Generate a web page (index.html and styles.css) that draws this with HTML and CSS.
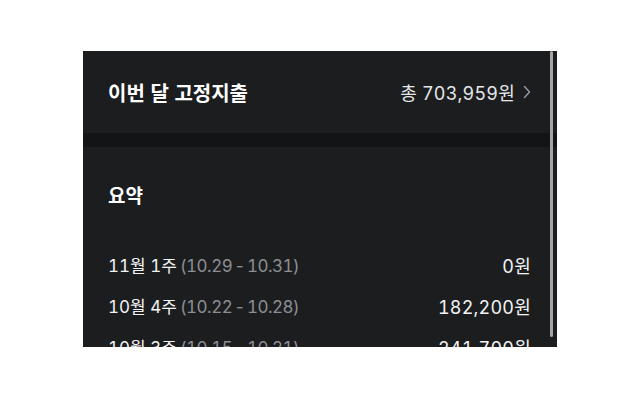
FILE: index.html
```html
<!DOCTYPE html>
<html lang="ko">
<head>
<meta charset="utf-8">
<link rel="stylesheet" href="styles.css">
</head>
<body>
<div class="panel">
  <div class="header">
    <div class="title">이번 달 고정지출</div>
    <div class="total">총 703,959원 <svg class="chev" width="8" height="14" viewBox="0 0 8 14"><path d="M1.5 1.5 L6.5 7 L1.5 12.5" fill="none" stroke="#9a9ca1" stroke-width="1.4" stroke-linecap="round" stroke-linejoin="round"/></svg></div>
  </div>
  <div class="sep"></div>
  <div class="summary">
    <div class="sum-title">요약</div>
    <div class="row"><div class="label">11월 1주<span class="range">(10.29 - 10.31)</span></div><div class="amt">0원</div></div>
    <div class="row"><div class="label">10월 4주<span class="range">(10.22 - 10.28)</span></div><div class="amt">182,200원</div></div>
    <div class="row"><div class="label">10월 3주<span class="range">(10.15 - 10.21)</span></div><div class="amt">241,700원</div></div>
  </div>
  <div class="scrollbar"></div>
</div>
</body>
</html>
```
FILE: styles.css
```css
html, body {
  margin: 0;
  padding: 0;
  background: #ffffff;
}
body {
  font-family: Inter, "Noto Sans CJK KR", sans-serif;
  padding: 51px 0 0 83px;
}
.panel {
  position: relative;
  width: 474px;
  height: 296px;
  overflow: hidden;
  background: #1c1d1f;
  color: #ffffff;
}
.header {
  height: 82px;
  display: flex;
  align-items: center;
  justify-content: space-between;
  padding: 0 26px 0 25px;
}
.title {
  font-family: "Noto Sans CJK KR", sans-serif;
  font-size: 20px;
  font-weight: 700;
}
.total {
  display: flex;
  align-items: center;
  gap: 8px;
  font-size: 18px;
  color: #e6e7e9;
  font-variant-numeric: tabular-nums;
  letter-spacing: 0.2px;
}
.sep {
  height: 14px;
  background: #131416;
}
.summary {
  padding: 34px 26px 0 25px;
}
.sum-title {
  font-family: "Noto Sans CJK KR", sans-serif;
  font-size: 19px;
  font-weight: 700;
  line-height: 28px;
  margin-bottom: 35px;
}
.row {
  height: 41px;
  display: flex;
  align-items: center;
  justify-content: space-between;
}
.label {
  color: #f2f3f5;
  font-size: 17px;
  font-variant-numeric: tabular-nums;
}
.range {
  color: #8c8e93;
  margin-left: 3px;
  letter-spacing: -0.5px;
  word-spacing: -2px;
}
.amt {
  color: #f2f3f5;
  font-size: 18px;
  font-variant-numeric: tabular-nums;
  letter-spacing: 0.2px;
}
.scrollbar {
  position: absolute;
  top: 0;
  left: 467px;
  width: 3px;
  height: 286px;
  border-radius: 2px;
  background: #a3a4a7;
}
```
